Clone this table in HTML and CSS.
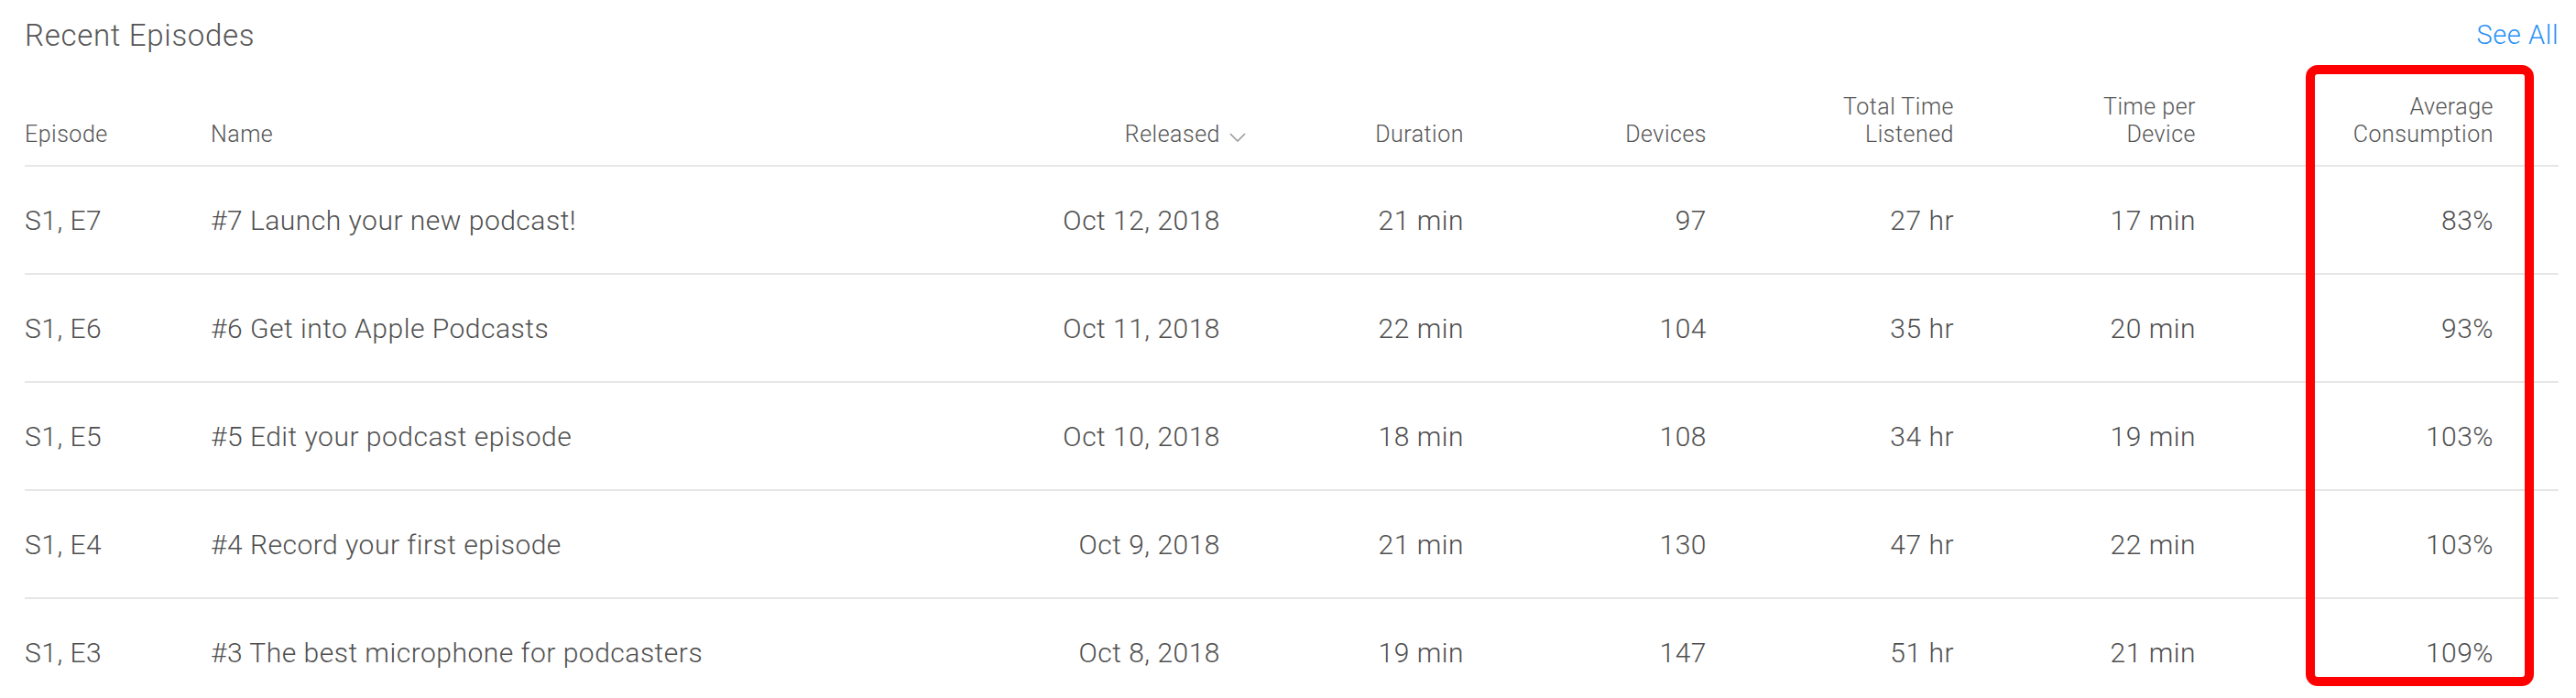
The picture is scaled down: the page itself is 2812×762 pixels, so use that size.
FILE: index.html
```html
<!DOCTYPE html>
<html lang="en">
<head>
<meta charset="utf-8">
<title>Recent Episodes</title>
<link rel="stylesheet" href="styles.css">
</head>
<body>
<section class="panel">
  <header class="panel-head">
    <h2 class="panel-title">Recent Episodes</h2>
    <a class="see-all" href="#">See All</a>
  </header>
  <div class="table">
    <div class="row head">
      <div class="cell">Episode</div>
      <div class="cell">Name</div>
      <div class="cell num sort">Released<svg class="chev" width="18" height="10" viewBox="0 0 18 10"><polyline points="1,1 9,9 17,1" fill="none" stroke="#9a9a9a" stroke-width="1.6"/></svg></div>
      <div class="cell num">Duration</div>
      <div class="cell num">Devices</div>
      <div class="cell num">Total Time<br>Listened</div>
      <div class="cell num">Time per<br>Device</div>
      <div class="cell num">Average<br>Consumption</div>
    </div>
    <div class="row">
      <div class="cell">S1, E7</div>
      <div class="cell">#7 Launch your new podcast!</div>
      <div class="cell num">Oct 12, 2018</div>
      <div class="cell num">21 min</div>
      <div class="cell num">97</div>
      <div class="cell num">27 hr</div>
      <div class="cell num">17 min</div>
      <div class="cell num">83%</div>
    </div>
    <div class="row">
      <div class="cell">S1, E6</div>
      <div class="cell">#6 Get into Apple Podcasts</div>
      <div class="cell num">Oct 11, 2018</div>
      <div class="cell num">22 min</div>
      <div class="cell num">104</div>
      <div class="cell num">35 hr</div>
      <div class="cell num">20 min</div>
      <div class="cell num">93%</div>
    </div>
    <div class="row">
      <div class="cell">S1, E5</div>
      <div class="cell">#5 Edit your podcast episode</div>
      <div class="cell num">Oct 10, 2018</div>
      <div class="cell num">18 min</div>
      <div class="cell num">108</div>
      <div class="cell num">34 hr</div>
      <div class="cell num">19 min</div>
      <div class="cell num">103%</div>
    </div>
    <div class="row">
      <div class="cell">S1, E4</div>
      <div class="cell">#4 Record your first episode</div>
      <div class="cell num">Oct 9, 2018</div>
      <div class="cell num">21 min</div>
      <div class="cell num">130</div>
      <div class="cell num">47 hr</div>
      <div class="cell num">22 min</div>
      <div class="cell num">103%</div>
    </div>
    <div class="row">
      <div class="cell">S1, E3</div>
      <div class="cell">#3 The best microphone for podcasters</div>
      <div class="cell num">Oct 8, 2018</div>
      <div class="cell num">19 min</div>
      <div class="cell num">147</div>
      <div class="cell num">51 hr</div>
      <div class="cell num">21 min</div>
      <div class="cell num">109%</div>
    </div>
  </div>
  <div class="highlight"></div>
</section>
</body>
</html>
```
FILE: styles.css
```css
html, body {
  margin: 0;
  padding: 0;
  background: #ffffff;
}

body {
  font-family: Roboto, "Liberation Sans", sans-serif;
  font-weight: 300;
  color: #4f4f4f;
  overflow: hidden;
}

.panel {
  position: relative;
  padding: 0 19px 0 27px;
}

.panel-head {
  display: flex;
  justify-content: space-between;
  align-items: center;
  height: 76px;
}

.panel-title {
  margin: 0;
  font-size: 33px;
  font-weight: 300;
  letter-spacing: 0.7px;
  color: #555555;
}

.see-all {
  font-size: 29px;
  font-weight: 300;
  letter-spacing: 0.6px;
  color: #2a92f4;
  text-decoration: none;
}

.row {
  display: grid;
  grid-template-columns: 203px 1fr 250px 266px 265px 270px 264px 325px;
  padding-right: 71px;
  height: 116px;
  align-items: center;
  border-bottom: 2px solid #e6e6e6;
  font-size: 30px;
  letter-spacing: 0.5px;
}

.row.head {
  height: 104px;
  align-items: end;
  font-size: 25px;
  line-height: 30px;
  letter-spacing: 0.5px;
  color: #555555;
}

.row.head .cell {
  padding-bottom: 18px;
}

.num {
  text-align: right;
}

.sort {
  position: relative;
}

.chev {
  position: absolute;
  right: -28px;
  bottom: 25px;
}

.highlight {
  position: absolute;
  left: 2517px;
  top: 71px;
  width: 249px;
  height: 678px;
  box-sizing: border-box;
  border: 10px solid #ff0000;
  border-radius: 13px;
}
```
